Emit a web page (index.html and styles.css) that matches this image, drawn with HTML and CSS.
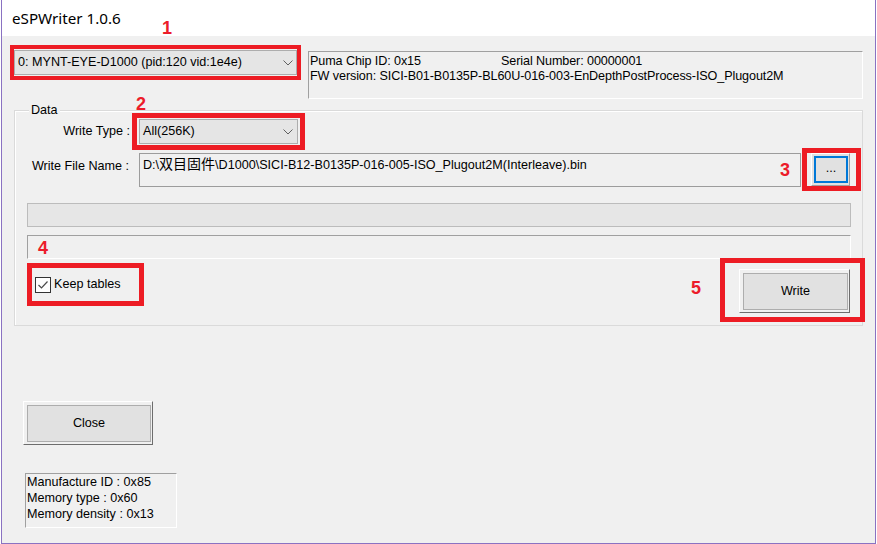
FILE: index.html
```html
<!DOCTYPE html>
<html>
<head>
<meta charset="utf-8">
<title>eSPWriter 1.0.6</title>
<link rel="stylesheet" href="styles.css">
</head>
<body>
<div class="window">
  <div class="titlebar"><span class="title">eSPWriter 1.0.6</span></div>
  <div class="client">
    <div class="top-row">
      <div class="mark mark-1">
        <div class="combo combo-device">
          <span class="combo-text">0: MYNT-EYE-D1000 (pid:120 vid:1e4e)</span>
          <svg class="chevron" width="10" height="6" viewBox="0 0 10 6"><polyline points="0.5,0.5 5,5 9.5,0.5" fill="none" stroke="#606060" stroke-width="1"/></svg>
        </div>
      </div>
      <div class="info-box">
        <div class="info-line"><span class="info-col">Puma Chip ID: 0x15</span><span>Serial Number: 00000001</span></div>
        <div class="info-line">FW version: SICI-B01-B0135P-BL60U-016-003-EnDepthPostProcess-ISO_Plugout2M</div>
      </div>
    </div>

    <div class="group">
      <div class="group-legend"><span>Data</span></div>
      <div class="row row-type">
        <label class="field-label">Write Type :</label>
        <div class="mark mark-2">
          <div class="combo combo-type">
            <span class="combo-text">All(256K)</span>
            <svg class="chevron" width="10" height="6" viewBox="0 0 10 6"><polyline points="0.5,0.5 5,5 9.5,0.5" fill="none" stroke="#606060" stroke-width="1"/></svg>
          </div>
        </div>
      </div>
      <div class="row row-file">
        <label class="field-label file-label">Write File Name :</label>
        <div class="file-field">D:\<span class="cjk">双目固件</span>\D1000\SICI-B12-B0135P-016-005-ISO_Plugout2M(Interleave).bin</div>
        <div class="mark mark-3">
          <div class="browse"><div class="browse-inner">...</div></div>
        </div>
      </div>
      <div class="progress"></div>
      <div class="status-box"></div>
      <div class="row row-actions">
        <div class="mark mark-4">
          <span class="checkbox">
            <svg width="14" height="14" viewBox="0 0 14 14"><polyline points="2.5,7 5.5,10 11.5,3.5" fill="none" stroke="#4a4a4a" stroke-width="1.2"/></svg>
          </span>
          <span class="check-label">Keep tables</span>
        </div>
        <div class="mark mark-5">
          <div class="btn btn-write"><div class="btn-inner">Write</div></div>
        </div>
      </div>
    </div>

    <div class="btn btn-close"><div class="btn-inner">Close</div></div>

    <div class="mem-box">
      <div>Manufacture ID : 0x85</div>
      <div>Memory type : 0x60</div>
      <div>Memory density : 0x13</div>
    </div>
  </div>

  <span class="num num-1">1</span>
  <span class="num num-2">2</span>
  <span class="num num-3">3</span>
  <span class="num num-4">4</span>
  <span class="num num-5">5</span>
</div>
</body>
</html>
```

FILE: styles.css
```css
* { box-sizing: border-box; }

html, body {
  margin: 0;
  padding: 0;
  background: #ffffff;
}

body {
  font-family: "Liberation Sans", Arial, "Noto Sans CJK SC", sans-serif;
  font-size: 12.6px;
  line-height: 15px;
  color: #000;
}

.window {
  position: relative;
  margin-left: 1px;
  width: 875px;
  height: 544px;
  border-left: 1px solid #8a72c2;
  border-right: 1px solid #8a72c2;
  border-bottom: 1px solid #8a72c2;
  background: #f0f0f0;
  display: flex;
  flex-direction: column;
  overflow: hidden;
}

.titlebar {
  height: 36px;
  flex: 0 0 36px;
  background: #ffffff;
  padding-left: 10px;
  line-height: 36px;
}

.title {
  font-family: "Noto Sans", "Open Sans", sans-serif;
  font-size: 15.2px;
  color: #000;
}

.client {
  flex: 1;
  padding-left: 8px;
  display: flex;
  flex-direction: column;
  align-items: flex-start;
}

/* red annotation boxes */
.mark {
  border-style: solid;
  border-color: #ed1c24;
}

.mark-1 {
  border-width: 4px;
  padding: 1px 0;
}

.mark-2 {
  border-width: 5px;
  padding: 1px 2px;
}

.mark-3 {
  border-width: 5px;
  padding: 0 6px 0 4px;
  margin-left: 1px;
}

.mark-4 {
  border-width: 5px;
  width: 117px;
  height: 43px;
  padding-left: 3px;
  display: flex;
  align-items: center;
  margin-top: 5px;
  align-self: flex-start;
}

.mark-5 {
  border-width: 5px;
  padding: 6px 10px 4px 14px;
}

/* top row */
.top-row {
  display: flex;
  align-items: flex-start;
  margin-top: 9px;
}

.combo {
  display: flex;
  align-items: center;
  justify-content: space-between;
  height: 25px;
  background: #e5e5e5;
  border: 1px solid #adadad;
  padding-left: 3px;
}

.combo-device {
  width: 283px;
  padding-right: 3px;
}

.combo-type {
  width: 159px;
  padding-right: 4px;
}

.combo-text { white-space: nowrap; }

.chevron { display: block; flex: none; }

.info-box {
  margin-left: 7px;
  margin-top: 6px;
  width: 555px;
  height: 48px;
  border-style: solid;
  border-width: 1px;
  border-color: #a0a0a0 #ffffff #ffffff #a0a0a0;
  padding: 2px 0 0 1px;
}

.info-line {
  display: flex;
  white-space: nowrap;
  letter-spacing: -0.1px;
}

.info-col {
  width: 191px;
  flex: none;
}

/* group */
.group {
  margin-top: 11px;
  margin-left: 4px;
  width: 849px;
  height: 216px;
  border: 1px solid #dadada;
  box-shadow: inset 1px 1px 0 #ffffff;
  display: flex;
  flex-direction: column;
  align-items: flex-start;
}

.group-legend {
  height: 0;
  padding-left: 14px;
}

.group-legend span {
  position: relative;
  top: -8px;
  padding: 0 2px;
  background: #f0f0f0;
}

.row {
  display: flex;
  align-items: center;
}

.field-label {
  width: 115px;
  flex: none;
  text-align: right;
  white-space: nowrap;
}

.row-type {
  margin-top: 2px;
}

.row-type .mark-2 {
  margin-left: 2px;
}

.row-file {
  margin-top: -2px;
}

.file-label {
  padding-bottom: 6px;
  padding-right: 1px;
}

.file-field {
  margin-left: 9px;
  width: 662px;
  height: 34px;
  border: 1px solid #9c9c9c;
  background: #f0f0f0;
  padding: 2px 0 0 3px;
  white-space: nowrap;
}

.cjk {
  font-family: "Noto Sans CJK SC", sans-serif;
  font-size: 14px;
}

.browse {
  width: 39px;
  height: 33px;
  border-style: solid;
  border-width: 1px;
  border-color: #ffffff #a0a0a0 #a0a0a0 #ffffff;
  background: #e1e1e1;
  padding: 2px 1px 2px 2px;
}

.browse-inner {
  width: 100%;
  height: 100%;
  border: 2px solid #0078d7;
  display: flex;
  align-items: center;
  justify-content: center;
  padding-bottom: 2px;
}

.progress {
  margin-top: 12px;
  margin-left: 12px;
  width: 824px;
  height: 24px;
  background: #e6e6e6;
  border: 1px solid #bcbcbc;
}

.status-box {
  margin-top: 8px;
  margin-left: 12px;
  width: 824px;
  height: 24px;
  border-style: solid;
  border-width: 1px;
  border-color: #a0a0a0 #ffffff #ffffff #a0a0a0;
}

.row-actions {
  margin-top: -1px;
  padding-left: 12px;
  width: 850px;
  justify-content: space-between;
  align-items: flex-start;
}

.checkbox {
  width: 16px;
  height: 16px;
  flex: none;
  border: 1px solid #333333;
  background: #ffffff;
  display: flex;
  align-items: center;
  justify-content: center;
}

.checkbox svg { display: block; }

.check-label {
  margin-left: 3px;
  white-space: nowrap;
}

/* buttons */
.btn {
  border-style: solid;
  border-width: 1px;
  border-color: #ffffff #6d6d6d #6d6d6d #ffffff;
  background: #f0f0f0;
  padding: 3px 1px 2px 3px;
}

.btn-inner {
  width: 100%;
  height: 100%;
  border: 1px solid #adadad;
  background: #e1e1e1;
  display: flex;
  align-items: center;
  justify-content: center;
}

.btn-write {
  width: 111px;
  height: 44px;
}

.btn-close {
  margin-top: 75px;
  margin-left: 13px;
  width: 130px;
  height: 44px;
}

.mem-box {
  margin-top: 28px;
  margin-left: 15px;
  width: 152px;
  height: 55px;
  border-style: solid;
  border-width: 1px;
  border-color: #a0a0a0 #ffffff #ffffff #a0a0a0;
  padding-left: 1px;
  line-height: 16px;
  white-space: nowrap;
}

/* annotation numbers */
.num {
  position: absolute;
  font-family: "Liberation Sans", Arial, sans-serif;
  font-weight: bold;
  font-size: 18px;
  line-height: 18px;
  color: #ec1c2a;
}

.num-1 { left: 160px; top: 19px; }
.num-2 { left: 134px; top: 95px; }
.num-3 { left: 778px; top: 161px; }
.num-4 { left: 36px; top: 239px; }
.num-5 { left: 689px; top: 279px; }
```
